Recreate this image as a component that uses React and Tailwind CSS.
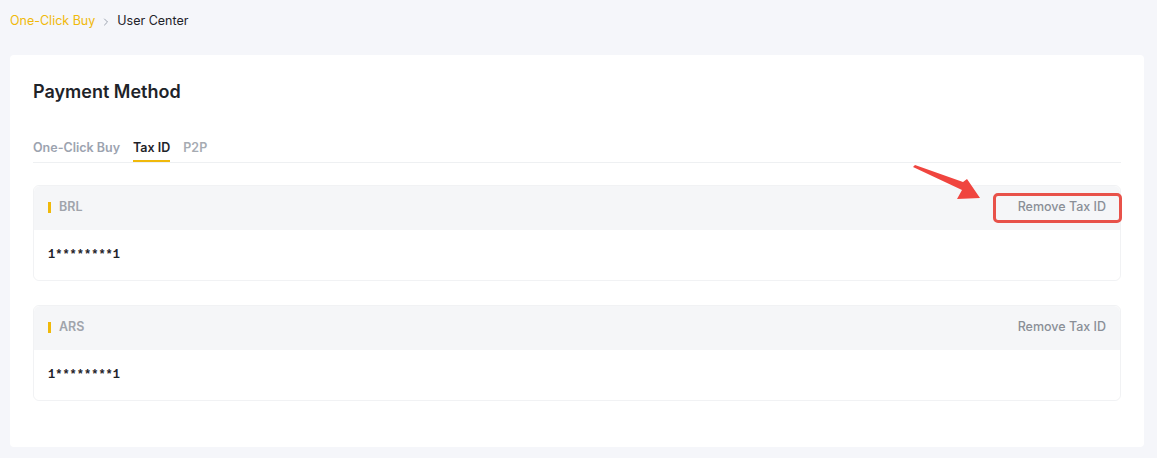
import { ChevronRight } from 'lucide-react'

const cuentas = [
  { moneda: 'BRL', taxId: '1********1', marcado: true },
  { moneda: 'ARS', taxId: '1********1', marcado: false },
]

function Flecha() {
  return (
    <svg className="absolute left-[900px] top-[160px] pointer-events-none" width="100" height="50" viewBox="0 0 100 50">
      <polygon points="13,7 15,5 63,22 67,19 80,38 57,39 62,30" fill="#f0453f" />
    </svg>
  )
}

function CuentaTax({ cuenta }) {
  return (
    <div className="rounded-md border border-[#f1f2f4]">
      <div className="h-[44px] bg-[#f5f6f8] rounded-t-md flex items-center justify-between pl-[14px] pr-[14px]">
        <div className="flex items-center gap-[8px]">
          <span className="w-[3px] h-[11px] bg-[#f0b90b]" />
          <span className="text-[12.5px] font-semibold text-[#a0a4ab]">{cuenta.moneda}</span>
        </div>
        <button
          className={
            cuenta.marcado
              ? 'text-[12.5px] font-medium text-[#8a8f97] border-[3px] border-[#e8524a] rounded-[5px] h-[30px] w-[129px] mr-[-16px] pr-[13px] text-right'
              : 'text-[12.5px] font-medium text-[#8a8f97]'
          }
        >
          Remove Tax ID
        </button>
      </div>
      <div className="h-[50px] flex items-center pl-[14px] bg-white rounded-b-md">
        <span className="text-[12px] font-bold text-[#1e2329] font-['Liberation_Mono',monospace]">{cuenta.taxId}</span>
      </div>
    </div>
  )
}

export default function App() {
  return (
    <div className="relative min-h-[458px] bg-[#f5f6fa] font-['Inter',sans-serif] pl-[10px] pr-[13px] pb-[11px]">
      {/* Breadcrumb */}
      <div className="h-[55px] flex items-start pt-[12px] text-[12.5px]">
        <span className="text-[#f0b90b]">One-Click Buy</span>
        <ChevronRight size={12} className="text-[#9ca3af] mx-[5px] mt-[4px]" />
        <span className="text-[#1e2329]">User Center</span>
      </div>

      {/* Card */}
      <div className="bg-white rounded-[4px] px-[23px] pt-[25px] pb-[46px]">
        <h2 className="text-[18px] font-semibold text-[#1e2329] leading-[24px]">Payment Method</h2>

        <div className="mt-[35px] flex gap-[13px] border-b border-[#eef0f2] text-[12.5px] font-semibold">
          <button className="text-[#9ca3af] pb-[4px]">One-Click Buy</button>
          <button className="text-[#1e2329] pb-[2px] border-b-2 border-[#f0b90b]">Tax ID</button>
          <button className="text-[#a6abb2] pb-[4px]">P2P</button>
        </div>

        <div className="mt-[22px] flex flex-col gap-[24px]">
          {cuentas.map(c => (
            <CuentaTax key={c.moneda} cuenta={c} />
          ))}
        </div>
      </div>

      <Flecha />
    </div>
  )
}
